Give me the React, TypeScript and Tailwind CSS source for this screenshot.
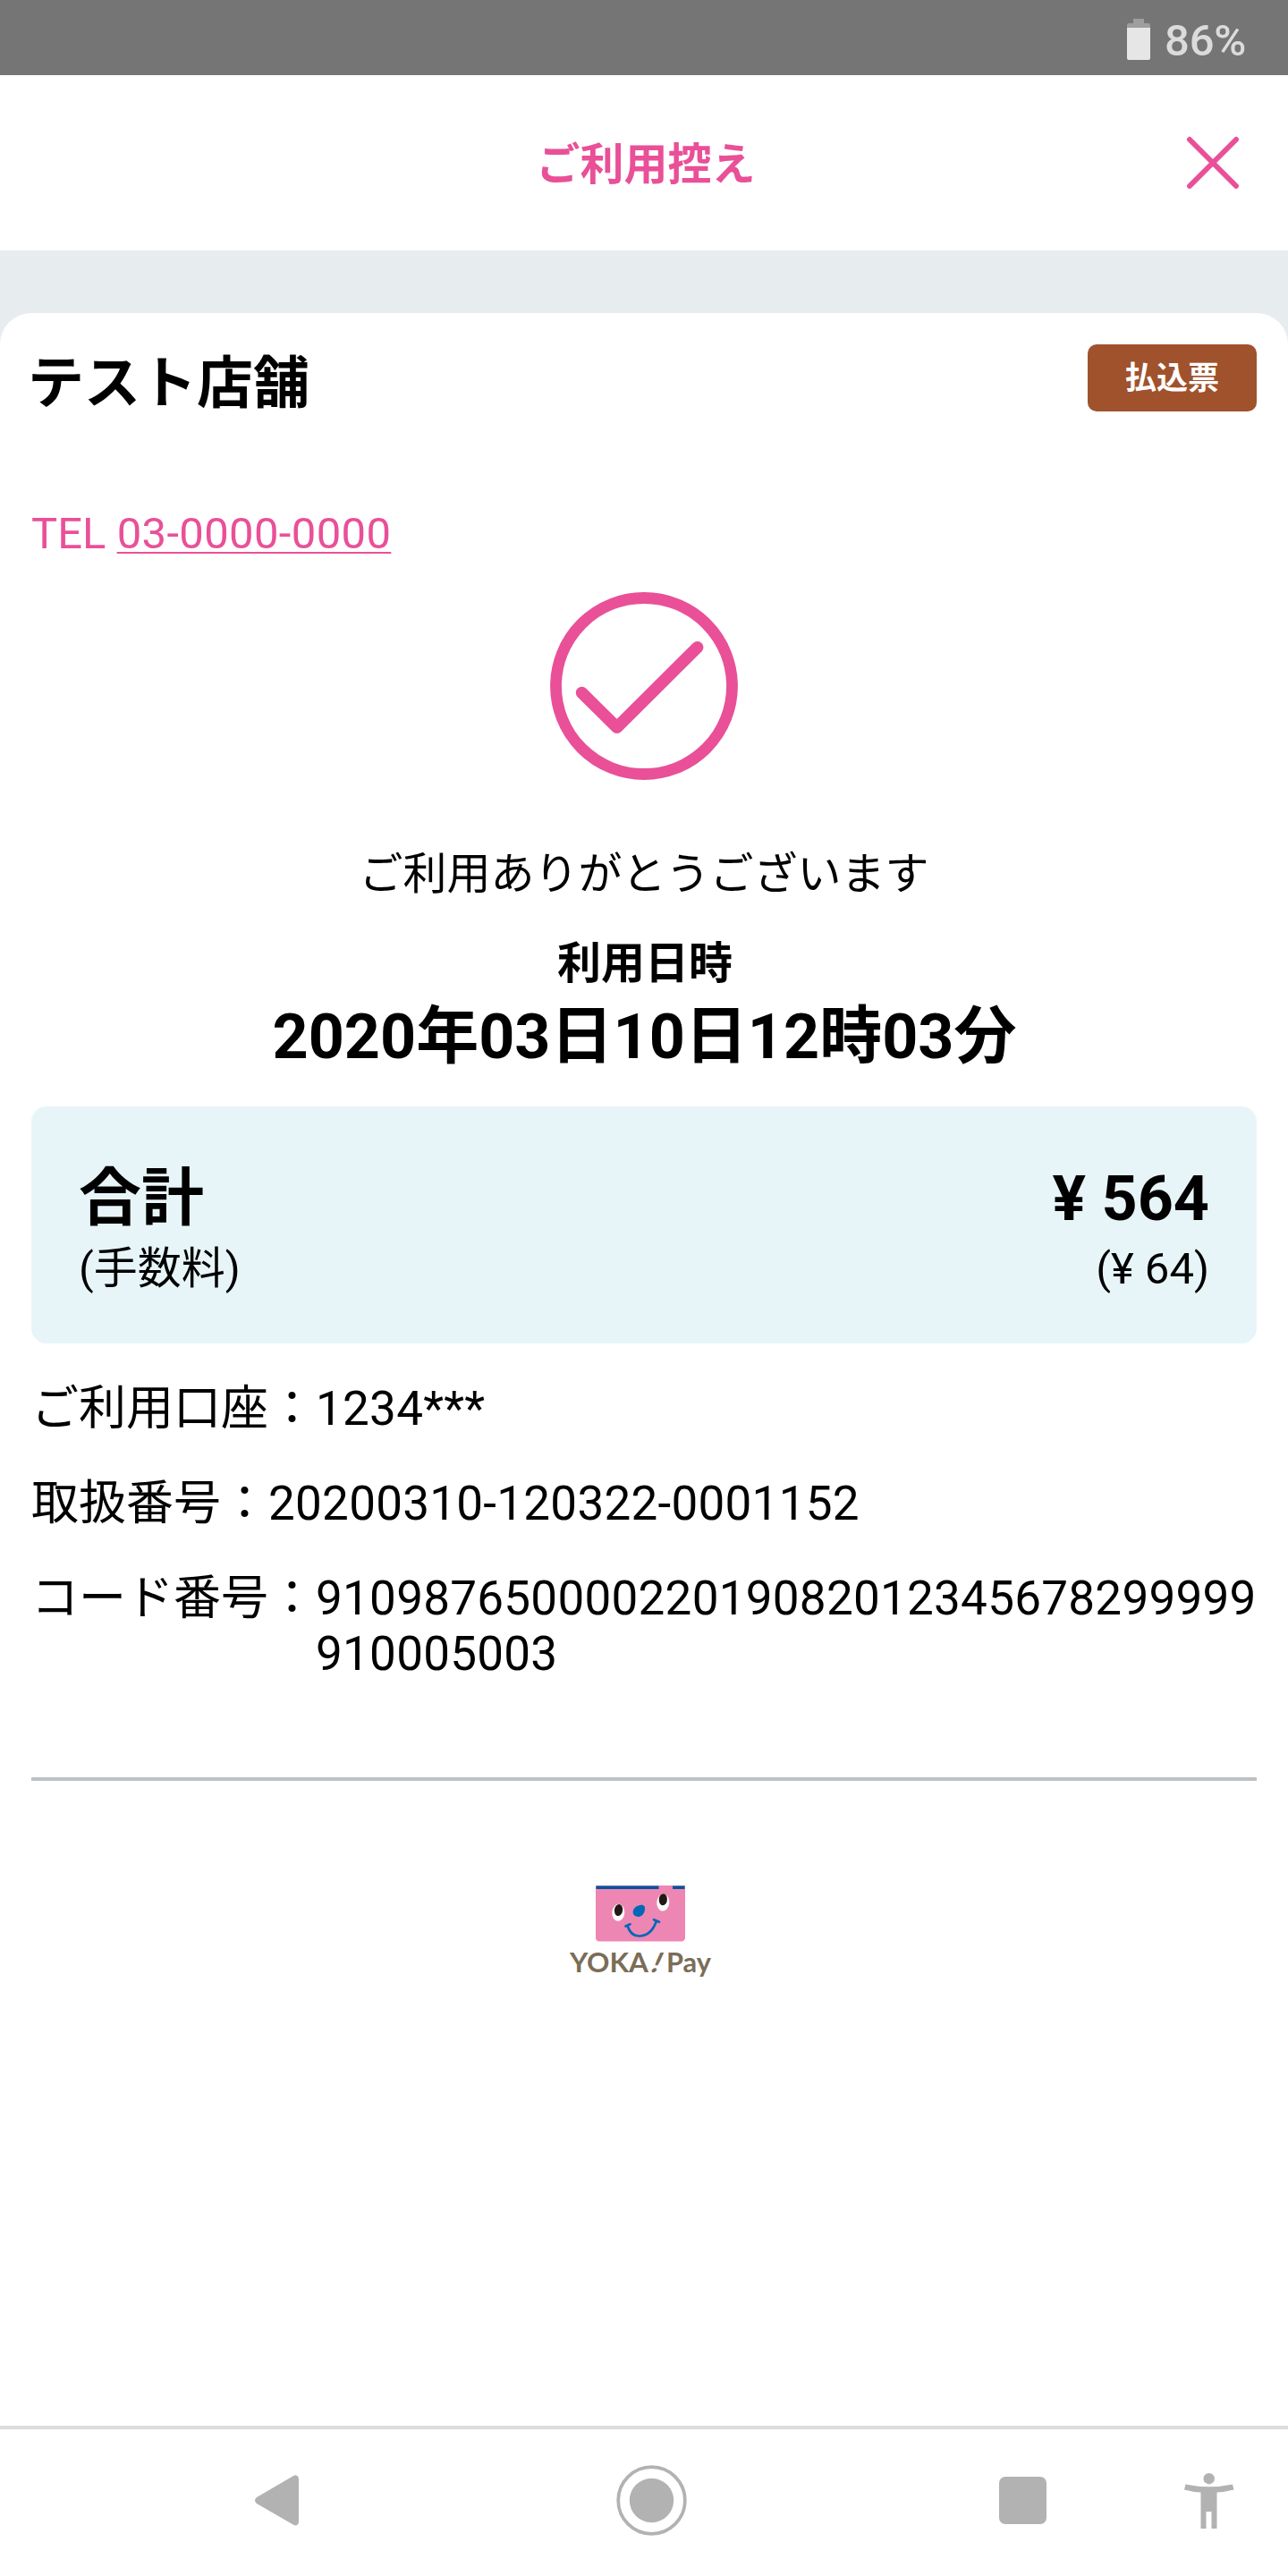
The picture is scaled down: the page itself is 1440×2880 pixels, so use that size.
import React from "react";

const PINK = "#e95098";

function Battery() {
  return (
    <svg width="26" height="46" viewBox="0 0 26 46" aria-hidden="true">
      <path d="M7 0h12v5h5q2 0 2 2v4H0V7q0-2 2-2h5z" fill="#9e9e9e" />
      <path d="M0 10h26v34q0 2-2 2H2q-2 0-2-2z" fill="#e6e6e6" />
    </svg>
  );
}

function StatusBar() {
  return (
    <div className="flex h-[84px] items-start justify-end bg-[#757575] pr-[47px] text-[#dbdbdb]">
      <div className="mt-[21px]">
        <Battery />
      </div>
      <span className="ml-[16px] mt-[16px] text-[49px] leading-[60px] font-medium tracking-[-0.3px]">
        86%
      </span>
    </div>
  );
}

function TitleBar() {
  return (
    <header className="grid h-[196px] grid-cols-[120px_1fr_120px] items-center bg-white">
      <span />
      <h1 className="pt-[5px] pl-[4px] text-center text-[49px] leading-[62px] font-bold text-[#e95098]">
        ご利用控え
      </h1>
      <button className="mr-[24px] flex justify-center pr-[24px]" aria-label="閉じる">
        <svg width="60" height="60" viewBox="0 0 60 60">
          <path d="M4 4L56 56M56 4L4 56" stroke={PINK} strokeWidth="6" strokeLinecap="round" />
        </svg>
      </button>
    </header>
  );
}

function Logo() {
  return (
    <svg width="170" height="106" viewBox="0 0 170 106" className="mx-auto">
      <path d="M31 0h100v58q0 4.500-4.500 4.500h-91q-4.500 0-4.500-4.500z" fill="#ee86b4" />
      <path d="M31.500 .5h70v3.500h-70zM117 .5h13.500v3.500H117z" fill="#00559f" />
      <ellipse cx="56.300" cy="30.300" rx="7" ry="9.500" fill="#fff" transform="rotate(5 56 30)" />
      <ellipse cx="56.500" cy="27.500" rx="4.600" ry="6.600" fill="#231815" transform="rotate(8 56.500 27.500)" />
      <ellipse cx="106.300" cy="19" rx="7" ry="9.500" fill="#fff" transform="rotate(5 106 19)" />
      <ellipse cx="106.300" cy="15.700" rx="4.600" ry="6.600" fill="#231815" transform="rotate(4 106 16)" />
      <path d="M80.500 22c3.500-.8 6 .5 5.500 4.500-.5 4.500-3 8-6.500 8.400-4 .3-7-2-6.800-5.400.2-4 3.300-6.500 7.800-7.500z" fill="#0068b7" />
      <path d="M66.500 45c2.500 8 7.500 11.700 13.500 11.500 9-.3 15.500-7 19-17M64.500 45.500l5-2.200M96 38.200l6 2.600" fill="none" stroke="#0068b7" strokeWidth="2.700" strokeLinecap="round" />
      <g fill="#7a6d58" fontFamily="Lato, sans-serif" fontWeight="700" fontSize="30.500">
        <text x="2" y="97" textLength="88" lengthAdjust="spacingAndGlyphs">YOKA</text>
        <text x="0" y="0" fontWeight="900" transform="translate(91 97) skewX(-24)">!</text>
        <text x="110" y="97" textLength="50" lengthAdjust="spacingAndGlyphs">Pay</text>
      </g>
    </svg>
  );
}

function Detail({ label, children }: { label: string; children: React.ReactNode }) {
  return (
    <div className="-mr-[10px] flex text-[53px] leading-[62px]">
      <dt className="shrink-0">{label}：</dt>
      <dd className="min-w-0 break-all tracking-[0.26px]">{children}</dd>
    </div>
  );
}

function Receipt() {
  return (
    <main className="bg-[#e7ecef] pt-[70px]">
      <div className="h-[2362px] rounded-t-[35px] bg-white px-[35px] pt-[35px]">
        <div className="flex items-start justify-between">
          <h2 className="-ml-[4px] text-[63px] leading-[87px] font-bold">テスト店舗</h2>
          <span className="flex h-[75px] w-[189px] items-center justify-center rounded-[10px] bg-[#a0522d] pt-[4px] text-[35px] font-bold text-white">
            払込票
          </span>
        </div>

        <p className="mt-[94px] text-[49px] leading-[62px] text-[#e95098]">
          TEL{" "}
          <a className="tracking-[0.35px] underline decoration-[2px] underline-offset-[4px]">03-0000-0000</a>
        </p>

        <svg className="mx-auto mt-[34px] block" width="210" height="210" viewBox="0 0 210 210" fill="none" stroke={PINK}>
          <circle cx="105" cy="105" r="98.500" strokeWidth="12.800" />
          <path d="M35.500 112.500L74.700 151.200L164.700 61.700" strokeWidth="13.500" strokeLinecap="round" strokeLinejoin="round" />
        </svg>

        <div className="text-center">
          <p className="mt-[75px] text-[49px] leading-[62px]">ご利用ありがとうございます</p>
          <p className="mt-[38px] pl-[2px] text-[49px] leading-[62px] font-bold">利用日時</p>
          <p className="mt-[9px] pl-[1px] text-[70px] leading-[82px] font-bold">2020年03日10日12時03分</p>
        </div>

        <section className="mt-[37px] h-[265px] rounded-[17px] bg-[#e7f5f9] px-[53px] pt-[62px]">
          <div className="flex justify-between text-[70px] leading-[82px] font-bold">
            <span>合計</span>
            <span>¥ 564</span>
          </div>
          <div className="mt-[7px] flex justify-between text-[49px] leading-[62px]">
            <span>(手数料)</span>
            <span>(¥ 64)</span>
          </div>
        </section>

        <dl className="mt-[42px] flex flex-col gap-[44px]">
          <Detail label="ご利用口座">1234***</Detail>
          <Detail label="取扱番号">20200310-120322-0001152</Detail>
          <Detail label="コード番号">91098765000022019082012345678299999910005003</Detail>
        </dl>

        <hr className="mt-[107px] mb-[117px] h-[4px] border-0 bg-[#bcc1c4]" />
        <div className="flex">
          <Logo />
        </div>
      </div>
    </main>
  );
}

function NavBar() {
  return (
    <nav className="flex h-[168px] items-center border-t-4 border-[#dcdcdc] bg-white pb-[5px] text-[#b2b2b2]">
      <svg className="ml-[285px]" width="49" height="57" viewBox="0 0 49 57" fill="currentColor">
        <path d="M43.500 .8Q45 0 46.500 .5Q49 1.500 49 4.500V52.500Q49 55.500 46.500 56.300Q45 56.800 43.500 56L2 32Q-2 28.500 2 25z" />
      </svg>
      <svg className="ml-[355px]" width="79" height="79" viewBox="0 0 79 79" fill="currentColor">
        <circle cx="39.500" cy="39.500" r="37.300" fill="none" stroke="currentColor" strokeWidth="3.700" />
        <circle cx="39.500" cy="39.500" r="24.700" />
      </svg>
      <span className="ml-[349px] h-[53px] w-[53px] rounded-[7px] bg-[#b2b2b2]" />
      <svg className="ml-[154px]" width="56" height="62" viewBox="0 0 56 62" fill="currentColor">
        <circle cx="27.700" cy="6.200" r="6.200" />
        <path d="M1.500 12.500Q28 18 54 12.500L55.500 18.500Q46 21 36.500 21.500V62H30.500V43H24.500V62H18.500V21.500Q9 21 0 18.500z" />
      </svg>
    </nav>
  );
}

export default function App() {
  return (
    <div className="w-[1440px] bg-white font-[Roboto,'Noto_Sans_CJK_JP',sans-serif] text-black" lang="ja">
      <StatusBar />
      <TitleBar />
      <Receipt />
      <NavBar />
    </div>
  );
}
